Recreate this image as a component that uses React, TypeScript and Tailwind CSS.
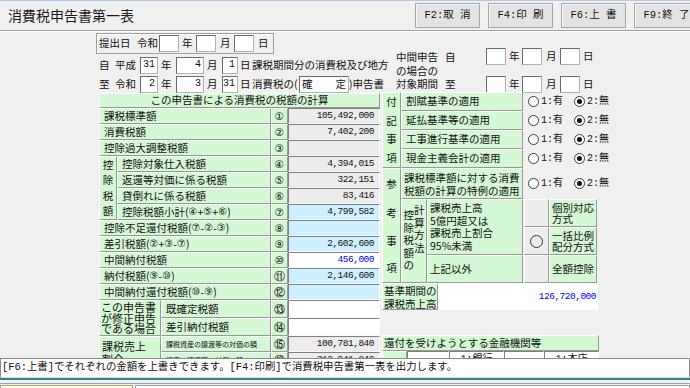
import React from "react";

const MONO = "font-['Liberation_Mono','Noto_Sans_CJK_JP',monospace]";
const GREEN = "bg-[#d4f7d4]";
const RAISED = "border border-t-white border-l-white border-b-[#989898] border-r-[#989898]";
const SUNKEN = "border border-t-[#808080] border-l-[#808080] border-b-[#fafafa] border-r-[#fafafa]";

function Lbl({ text }: { text: string }) {
  const parts = text.split(/([①-⑯])/);
  return (
    <>
      {parts.map((p, i) =>
        /[①-⑯]/.test(p) ? (
          <span key={i} className="font-['DejaVu_Sans',sans-serif] text-[10px]">
            {p}
          </span>
        ) : (
          <span key={i}>{p}</span>
        )
      )}
    </>
  );
}

function Input({ w, children, justify = "justify-end" }: { w: string; children?: React.ReactNode; justify?: string }) {
  return (
    <div
      className={`${w} h-[17px] shrink-0 bg-white border border-[#b0b0b0] border-t-[#6a6a6a] border-l-[#6a6a6a] flex items-center ${justify} px-[2px] ${MONO} text-[10px] leading-none text-[#111]`}
    >
      {children}
    </div>
  );
}

type RowT = {
  label: string;
  num: string;
  value: string;
  bg: "gray" | "blue" | "white";
  blueText?: boolean;
  small?: boolean;
};

function ValueCell({ r }: { r: RowT }) {
  const bgc = r.bg === "gray" ? "bg-[#ececec]" : r.bg === "blue" ? "bg-[#ccf0ff]" : "bg-white";
  return (
    <div
      className={`w-[92px] shrink-0 ${bgc} ${SUNKEN} flex items-center justify-end pr-[5px] ${MONO} text-[9.5px] tracking-[-0.5px] ${r.blueText ? "text-[#0000ff]" : "text-[#111]"}`}
    >
      {r.value}
    </div>
  );
}

function LRow({ r, labelW, h }: { r: RowT; labelW: string; h: string }) {
  return (
    <div className={`flex ${h}`}>
      <div
        className={`${labelW} shrink-0 ${GREEN} ${RAISED} flex items-center pl-[4px] overflow-hidden whitespace-nowrap ${r.small ? "text-[7px]" : "text-[10.5px]"}`}
      >
        <Lbl text={r.label} />
      </div>
      <div className={`w-[17px] shrink-0 ${GREEN} ${RAISED} flex items-center justify-center font-['DejaVu_Sans',sans-serif] text-[10.5px]`}>
        {r.num}
      </div>
      <ValueCell r={r} />
    </div>
  );
}

function Radio({ on }: { on?: boolean }) {
  return (
    <span className="inline-flex w-[11px] h-[11px] shrink-0 rounded-full border border-[#3c3c3c] bg-white items-center justify-center">
      {on && <span className="w-[5px] h-[5px] rounded-full bg-[#111]" />}
    </span>
  );
}

function RadioPair() {
  return (
    <div className={`flex items-center pl-[5px] ${MONO} text-[10px] text-[#111] whitespace-nowrap`}>
      <Radio />
      <span className="ml-[2px]">1:有</span>
      <span className="ml-[11px] flex">
        <Radio on />
      </span>
      <span className="ml-[2px]">2:無</span>
    </div>
  );
}

const top3: RowT[] = [
  { label: "課税標準額", num: "①", value: "105,492,000", bg: "gray" },
  { label: "消費税額", num: "②", value: "7,402,200", bg: "gray" },
  { label: "控除過大調整税額", num: "③", value: "", bg: "gray" },
];
const kojo: RowT[] = [
  { label: "控除対象仕入税額", num: "④", value: "4,394,015", bg: "gray" },
  { label: "返還等対価に係る税額", num: "⑤", value: "322,151", bg: "gray" },
  { label: "貸倒れに係る税額", num: "⑥", value: "83,416", bg: "gray" },
  { label: "控除税額小計(④+⑤+⑥)", num: "⑦", value: "4,799,582", bg: "blue" },
];
const mid: RowT[] = [
  { label: "控除不足還付税額(⑦-②-③)", num: "⑧", value: "", bg: "blue" },
  { label: "差引税額(②+③-⑦)", num: "⑨", value: "2,602,600", bg: "blue" },
  { label: "中間納付税額", num: "⑩", value: "456,000", bg: "white", blueText: true },
  { label: "納付税額(⑨-⑩)", num: "⑪", value: "2,146,600", bg: "blue" },
  { label: "中間納付還付税額(⑩-⑨)", num: "⑫", value: "", bg: "blue" },
];
const shusei: RowT[] = [
  { label: "既確定税額", num: "⑬", value: "", bg: "white" },
  { label: "差引納付税額", num: "⑭", value: "", bg: "white" },
];
const wariai: RowT[] = [
  { label: "課税資産の譲渡等の対価の額", num: "⑮", value: "100,781,840", bg: "gray", small: true },
  { label: "資産の譲渡等の対価の額", num: "⑯", value: "312,941,840", bg: "gray", small: true },
];

function FButton({ label }: { label: string }) {
  return (
    <div
      className={`w-[65px] h-[25px] bg-[#e3e3e3] border border-[#a6a6a6] shadow-[inset_1px_1px_0_#f8f8f8] flex items-center justify-center ${MONO} text-[10.5px] text-[#111] whitespace-pre`}
    >
      {label}
    </div>
  );
}

export default function App() {
  return (
    <div className="w-[690px] h-[388px] overflow-hidden bg-[#f0f0f0] text-[#111] font-['Noto_Sans_CJK_JP','Noto_Sans_CJK_SC',sans-serif]">
      {/* Header */}
      <div className="h-[30px] border-t border-[#a8c8ec] flex items-start">
        <div className="pl-[8px] pt-[6px] text-[14px] leading-[16px] text-[#1a1a1a]">消費税申告書第一表</div>
        <div className="ml-auto flex gap-[8px] mt-[2px] mr-[-9px]">
          <FButton label="F2:取 消" />
          <FButton label="F4:印 刷" />
          <FButton label="F6:上 書" />
          <FButton label="F9:終 了" />
        </div>
      </div>
      <div className="h-[2px] border-t border-[#a0a0a0] border-b border-b-white" />

      {/* Form area */}
      <div className="h-[326px] overflow-hidden pl-[96px] text-[10.5px] leading-none">
        {/* top block */}
        <div className="h-[61px] flex">
          <div className="w-[300px] flex flex-col">
            <div className="mt-[1px] w-[178px] h-[21px] border border-[#a0a0a0] shadow-[inset_1px_1px_0_#fff] flex items-center pl-[2px]">
              <span className="w-[38px]">提出日</span>
              <span className="w-[22px]">令和</span>
              <Input w="w-[20px]" />
              <span className="w-[17px] pl-[3px]">年</span>
              <Input w="w-[20px]" />
              <span className="w-[18px] pl-[4px]">月</span>
              <Input w="w-[20px]" />
              <span className="pl-[4px]">日</span>
            </div>
            <div className="mt-[3px] h-[18px] flex items-center pl-[3px] whitespace-nowrap">
              <span className="w-[16px]">自</span>
              <span className="w-[25px]">平成</span>
              <Input w="w-[18px]" justify="justify-center">31</Input>
              <span className="w-[18px] pl-[3px]">年</span>
              <Input w="w-[28px]">4</Input>
              <span className="w-[18px] pl-[3px]">月</span>
              <Input w="w-[16px]">1</Input>
              <span className="w-[14px] pl-[2px]">日</span>
              <span>課税期間分の消費税及び地方</span>
            </div>
            <div className="mt-[1px] h-[18px] flex items-center pl-[3px] whitespace-nowrap">
              <span className="w-[16px]">至</span>
              <span className="w-[25px]">令和</span>
              <Input w="w-[18px]">2</Input>
              <span className="w-[18px] pl-[3px]">年</span>
              <Input w="w-[28px]">3</Input>
              <span className="w-[18px] pl-[3px]">月</span>
              <Input w="w-[16px]">31</Input>
              <span className="w-[14px] pl-[2px]">日</span>
              <span className="w-[47px]">消費税の(</span>
              <div className="w-[50px] h-[17px] bg-white border border-[#b0b0b0] border-t-[#6a6a6a] border-l-[#6a6a6a] flex items-center justify-between px-[2px]">
                <span>確</span>
                <span>定</span>
              </div>
              <span>)申告書</span>
            </div>
          </div>
          <div className="flex">
            <div className="w-[90px] pt-[18px] leading-[13.5px] whitespace-nowrap">
              <div>
                中間申告<span className="ml-[7px]">自</span>
              </div>
              <div>の場合の</div>
              <div>
                対象期間<span className="ml-[7px]">至</span>
              </div>
            </div>
            <div className="pt-[16px] flex flex-col gap-[11px]">
              {[0, 1].map((i) => (
                <div key={i} className="flex items-center h-[17px]">
                  <Input w="w-[20px]" />
                  <span className="w-[16px] pl-[3px]">年</span>
                  <Input w="w-[20px]" />
                  <span className="w-[18px] pl-[4px]">月</span>
                  <Input w="w-[20px]" />
                  <span className="pl-[3px]">日</span>
                </div>
              ))}
            </div>
          </div>
        </div>

        {/* table block */}
        <div className="flex items-start">
          {/* left table */}
          <div className="ml-[3px] w-[281px] flex flex-col">
            <div className={`h-[15px] ${GREEN} ${RAISED} flex items-center justify-center`}>この申告書による消費税の税額の計算</div>
            {top3.map((r) => (
              <LRow key={r.num} r={r} labelW="w-[172px]" h="h-[16px]" />
            ))}
            <div className="flex">
              <div className={`w-[18px] shrink-0 ${GREEN} ${RAISED} flex flex-col`}>
                {["控", "除", "税", "額"].map((c) => (
                  <div key={c} className="flex-1 flex items-center justify-center">
                    {c}
                  </div>
                ))}
              </div>
              <div className="flex flex-col">
                {kojo.map((r) => (
                  <LRow key={r.num} r={r} labelW="w-[154px]" h="h-[16px]" />
                ))}
              </div>
            </div>
            {mid.map((r) => (
              <LRow key={r.num} r={r} labelW="w-[172px]" h="h-[16px]" />
            ))}
            <div className="flex">
              <div className={`w-[62px] shrink-0 ${GREEN} ${RAISED} flex flex-col justify-center pl-[1px] text-[11px] leading-[10.5px]`}>
                <span>この申告書</span>
                <span>が修正申告</span>
                <span>である場合</span>
              </div>
              <div className="flex flex-col">
                {shusei.map((r) => (
                  <LRow key={r.num} r={r} labelW="w-[110px]" h="h-[18px]" />
                ))}
              </div>
            </div>
            <div className="flex">
              <div className={`w-[62px] shrink-0 ${GREEN} ${RAISED} flex flex-col pl-[2px] pt-[3px] text-[11px] leading-[13px]`}>
                <span>課税売上</span>
                <span>割合</span>
              </div>
              <div className="flex flex-col">
                {wariai.map((r) => (
                  <LRow key={r.num} r={r} labelW="w-[110px]" h="h-[16px]" />
                ))}
              </div>
            </div>
          </div>

          {/* right section */}
          <div className="ml-[2px] w-[240px] flex flex-col -mt-[1px]">
            <div className="flex">
              <div className={`w-[19px] shrink-0 ${GREEN} ${RAISED} flex flex-col`}>
                {["付", "記", "事", "項"].map((c) => (
                  <div key={c} className="flex-1 flex items-center justify-center">
                    {c}
                  </div>
                ))}
              </div>
              <div className="flex flex-col">
                {["割賦基準の適用", "延払基準等の適用", "工事進行基準の適用", "現金主義会計の適用"].map((t) => (
                  <div key={t} className="flex h-[19px]">
                    <div className={`w-[122px] shrink-0 ${GREEN} ${RAISED} flex items-center pl-[4px]`}>{t}</div>
                    <RadioPair />
                  </div>
                ))}
              </div>
            </div>
            <div className="flex">
              <div className={`w-[19px] shrink-0 ${GREEN} ${RAISED} flex flex-col`}>
                <div className="h-[31px] flex items-center justify-center">参</div>
                <div className="flex-1 flex items-center justify-center">考</div>
                <div className="flex-1 flex items-center justify-center">事</div>
                <div className="flex-1 flex items-center justify-center">項</div>
              </div>
              <div className="flex flex-col">
                <div className="flex h-[31px]">
                  <div className={`w-[122px] shrink-0 ${GREEN} ${RAISED} flex flex-col justify-center pl-[2px] leading-[13px] whitespace-nowrap`}>
                    <span>課税標準額に対する消費</span>
                    <span>税額の計算の特例の適用</span>
                  </div>
                  <RadioPair />
                </div>
                <div className="flex h-[84px]">
                  <div className={`w-[26px] shrink-0 ${GREEN} ${RAISED} flex justify-center leading-[12.5px]`}>
                    <div className="flex flex-col pt-[9px]">
                      {["控", "除", "税", "額", "の"].map((c) => (
                        <span key={c}>{c}</span>
                      ))}
                    </div>
                    <div className="flex flex-col pt-[4px]">
                      {["計", "算", "方", "法"].map((c) => (
                        <span key={c}>{c}</span>
                      ))}
                    </div>
                  </div>
                  <div className="w-[96px] shrink-0 flex flex-col">
                    <div className={`h-[56px] ${GREEN} ${RAISED} flex flex-col pl-[2px] pt-[2px] leading-[12.5px] whitespace-nowrap`}>
                      <span>課税売上高</span>
                      <span>5億円超又は</span>
                      <span>課税売上割合</span>
                      <span>95%未満</span>
                    </div>
                    <div className={`flex-1 ${GREEN} ${RAISED} flex items-center pl-[2px]`}>上記以外</div>
                  </div>
                  <div className="w-[25px] shrink-0 ml-[1px] flex flex-col">
                    <div className="h-[28px] bg-[#ededed] border border-[#9a9a9a] border-t-white border-l-white" />
                    <div className="h-[28px] bg-[#ededed] border border-[#9a9a9a] border-t-white border-l-white flex items-center justify-center">
                      <span className="w-[13px] h-[13px] rounded-full border border-[#333]" />
                    </div>
                    <div className="h-[28px] bg-[#ededed] border border-[#9a9a9a] border-t-white border-l-white" />
                  </div>
                  <div className="w-[48px] shrink-0 flex flex-col">
                    <div className={`h-[28px] ${GREEN} ${RAISED} flex flex-col justify-center pl-[2px] leading-[11px]`}>
                      <span>個別対応</span>
                      <span>方式</span>
                    </div>
                    <div className={`h-[28px] ${GREEN} ${RAISED} flex flex-col justify-center pl-[2px] leading-[11px]`}>
                      <span>一括比例</span>
                      <span>配分方式</span>
                    </div>
                    <div className={`h-[28px] ${GREEN} ${RAISED} flex items-center pl-[2px]`}>全額控除</div>
                  </div>
                </div>
              </div>
            </div>
            <div className="flex h-[27px]">
              <div className={`w-[56px] shrink-0 ${GREEN} ${RAISED} flex flex-col justify-center pl-[1px] leading-[13px] whitespace-nowrap`}>
                <span>基準期間の</span>
                <span>課税売上高</span>
              </div>
              <div className={`w-[160px] shrink-0 bg-white flex items-center justify-end pr-[2px] ${MONO} text-[9.5px] tracking-[-0.5px] text-[#0000ff]`}>
                126,720,000
              </div>
            </div>
            <div className="h-[25px]" />
            <div className={`w-[217px] h-[16px] ${GREEN} ${RAISED} flex items-center pl-[1px]`}>還付を受けようとする金融機関等</div>
            <div className="flex h-[18px] w-[217px]">
              <div className={`w-[25px] ${GREEN} ${RAISED}`} />
              <div className={`w-[42px] bg-white ${SUNKEN}`} />
              <div className={`w-[55px] bg-white ${SUNKEN} flex items-center justify-center ${MONO} text-[10px]`}>1:銀行</div>
              <div className={`w-[40px] bg-white ${SUNKEN}`} />
              <div className={`w-[55px] bg-white ${SUNKEN} flex items-center justify-center ${MONO} text-[10px]`}>1:本店</div>
            </div>
          </div>
        </div>
      </div>

      {/* status bar */}
      <div className={`h-[20px] bg-white border border-[#8a8a8a] border-b-[#e0e0e0] flex items-center pl-[1px] ${MONO} text-[10.4px] whitespace-nowrap`}>
        [F6:上書]でそれぞれの金額を上書きできます。[F4:印刷]で消費税申告書第一表を出力します。
      </div>
      <div className="h-[2px] bg-[#2f7f8f]" />
      <div className="h-[3px]" />
      <div className="h-[20px] flex border-t border-[#a0a0a0] pt-[1px]">
        <div className="w-[133px] bg-[#ffffd0] border border-[#a0a0a0]" />
        <div className="ml-[2px] flex-1 bg-white border border-[#a0a0a0]" />
      </div>
    </div>
  );
}
